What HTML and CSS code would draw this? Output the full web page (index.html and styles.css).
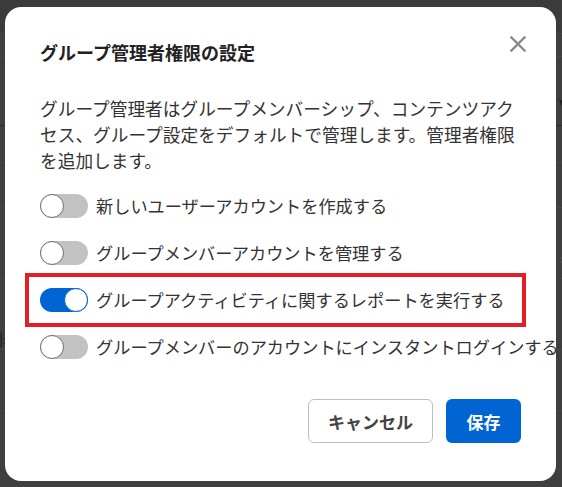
FILE: index.html
```html
<!DOCTYPE html>
<html lang="ja">
<head>
<meta charset="utf-8">
<title>グループ管理者権限の設定</title>
<link rel="stylesheet" href="styles.css">
</head>
<body>
<div class="page">
  <div class="page-top"></div>
  <div class="page-row r1"><span></span><span class="caret">▾</span></div>
  <div class="page-row r2"></div>
  <div class="page-row r3"></div>
  <div class="page-row r4"></div>
  <div class="page-row r5"><span></span><span class="chev">›</span></div>
  <div class="page-row r6"><span class="cell">到着</span></div>
  <div class="page-row r7"></div>
</div>

<div class="dialog" role="dialog" aria-labelledby="dlg-title">
  <div class="dialog-header">
    <h2 id="dlg-title" class="dialog-title">グループ管理者権限の設定</h2>
    <button class="close" aria-label="閉じる">
      <svg width="18" height="18" viewBox="0 0 18 18"><path d="M2.5 2.5 L15.5 15.5 M15.5 2.5 L2.5 15.5" stroke="#8a8a8a" stroke-width="2.4" stroke-linecap="square" fill="none"/></svg>
    </button>
  </div>
  <p class="desc">グループ管理者はグループメンバーシップ、コンテンツアクセス、グループ設定をデフォルトで管理します。管理者権限を追加します。</p>
  <div class="options">
    <label class="option"><span class="toggle"><span class="knob"></span></span><span class="label">新しいユーザーアカウントを作成する</span></label>
    <label class="option"><span class="toggle"><span class="knob"></span></span><span class="label">グループメンバーアカウントを管理する</span></label>
    <label class="option highlight"><span class="toggle on"><span class="knob"></span></span><span class="label">グループアクティビティに関するレポートを実行する</span></label>
    <label class="option"><span class="toggle"><span class="knob"></span></span><span class="label">グループメンバーのアカウントにインスタントログインする</span></label>
  </div>
  <div class="actions">
    <button class="btn btn-cancel">キャンセル</button>
    <button class="btn btn-save">保存</button>
  </div>
</div>
</body>
</html>
```

FILE: styles.css
```css
html, body {
  margin: 0;
  padding: 0;
}
body {
  width: 562px;
  height: 487px;
  overflow: hidden;
  background: #3f3f3f;
  font-family: "Noto Sans CJK JP", "Noto Sans", sans-serif;
  position: relative;
}
.page {
  display: flex;
  flex-direction: column;
}
.page-top {
  height: 33px;
  background: #3b3b3b;
  border-bottom: 1px solid #474747;
}
.page-row {
  display: flex;
  justify-content: space-between;
  align-items: center;
  border-bottom: 1px solid #474747;
  color: #1e1e1e;
  font-size: 15px;
}
.r1 { height: 22px; }
.r2 { height: 68px; border-bottom-color: #2c2c2c; }
.r3 { height: 36px; }
.r4 { height: 44px; }
.r5 { height: 70px; }
.r6 { height: 70px; }
.r7 { height: 60px; }
.caret { margin-right: -3px; font-size: 12px; margin-top: 110px; color: #1c1c1c; }
.chev { margin-right: -2px; color: #5a5a5a; margin-top: 28px; }
.cell { margin-left: -12px; margin-top: 48px; }

.dialog {
  position: absolute;
  left: 5px;
  top: 7px;
  width: 551px;
  height: 474px;
  box-sizing: border-box;
  padding: 32px 35px 38px;
  background: #fff;
  border-radius: 16px;
  display: flex;
  flex-direction: column;
}
.dialog-header {
  display: flex;
  justify-content: space-between;
  align-items: flex-start;
}
.dialog-title {
  margin: 0;
  font-size: 18px;
  line-height: 26px;
  font-weight: 700;
  color: #222;
}
.close {
  border: 0;
  background: none;
  padding: 0;
  margin: -4px -6px 0 0;
  width: 18px;
  height: 18px;
  display: flex;
}
.desc {
  margin: 30px 0 0;
  font-size: 17.7px;
  line-height: 26px;
  color: #333;
}
.options {
  margin-top: 20px;
  display: flex;
  flex-direction: column;
  gap: 21px;
}
.option {
  display: flex;
  align-items: center;
  gap: 8px;
  height: 26px;
}
.label {
  font-size: 17.2px;
  line-height: 26px;
  color: #333;
  white-space: nowrap;
}
.toggle {
  width: 48px;
  height: 24px;
  border-radius: 12px;
  background: #c2c2c2;
  display: flex;
  justify-content: flex-start;
  flex-shrink: 0;
}
.knob {
  width: 24px;
  height: 24px;
  box-sizing: border-box;
  border-radius: 50%;
  background: #fff;
  border: 1px solid #6f6f6f;
}
.toggle.on {
  background: #0064d2;
  justify-content: flex-end;
}
.toggle.on .knob {
  border-color: #0064d2;
}
.highlight {
  position: relative;
}
.highlight::after {
  content: "";
  position: absolute;
  left: -15px;
  right: -5px;
  top: -14px;
  bottom: -14px;
  border: 4px solid #e31e24;
}
.actions {
  margin-top: auto;
  display: flex;
  justify-content: flex-end;
  gap: 13px;
}
.btn {
  height: 44px;
  border-radius: 6px;
  font-family: inherit;
  font-size: 17px;
  font-weight: 700;
  padding: 0;
}
.btn-cancel {
  width: 125px;
  background: #fff;
  border: 1px solid #bdbdbd;
  color: #444;
}
.btn-save {
  width: 75px;
  background: #0064d2;
  border: 0;
  color: #fff;
}
```
